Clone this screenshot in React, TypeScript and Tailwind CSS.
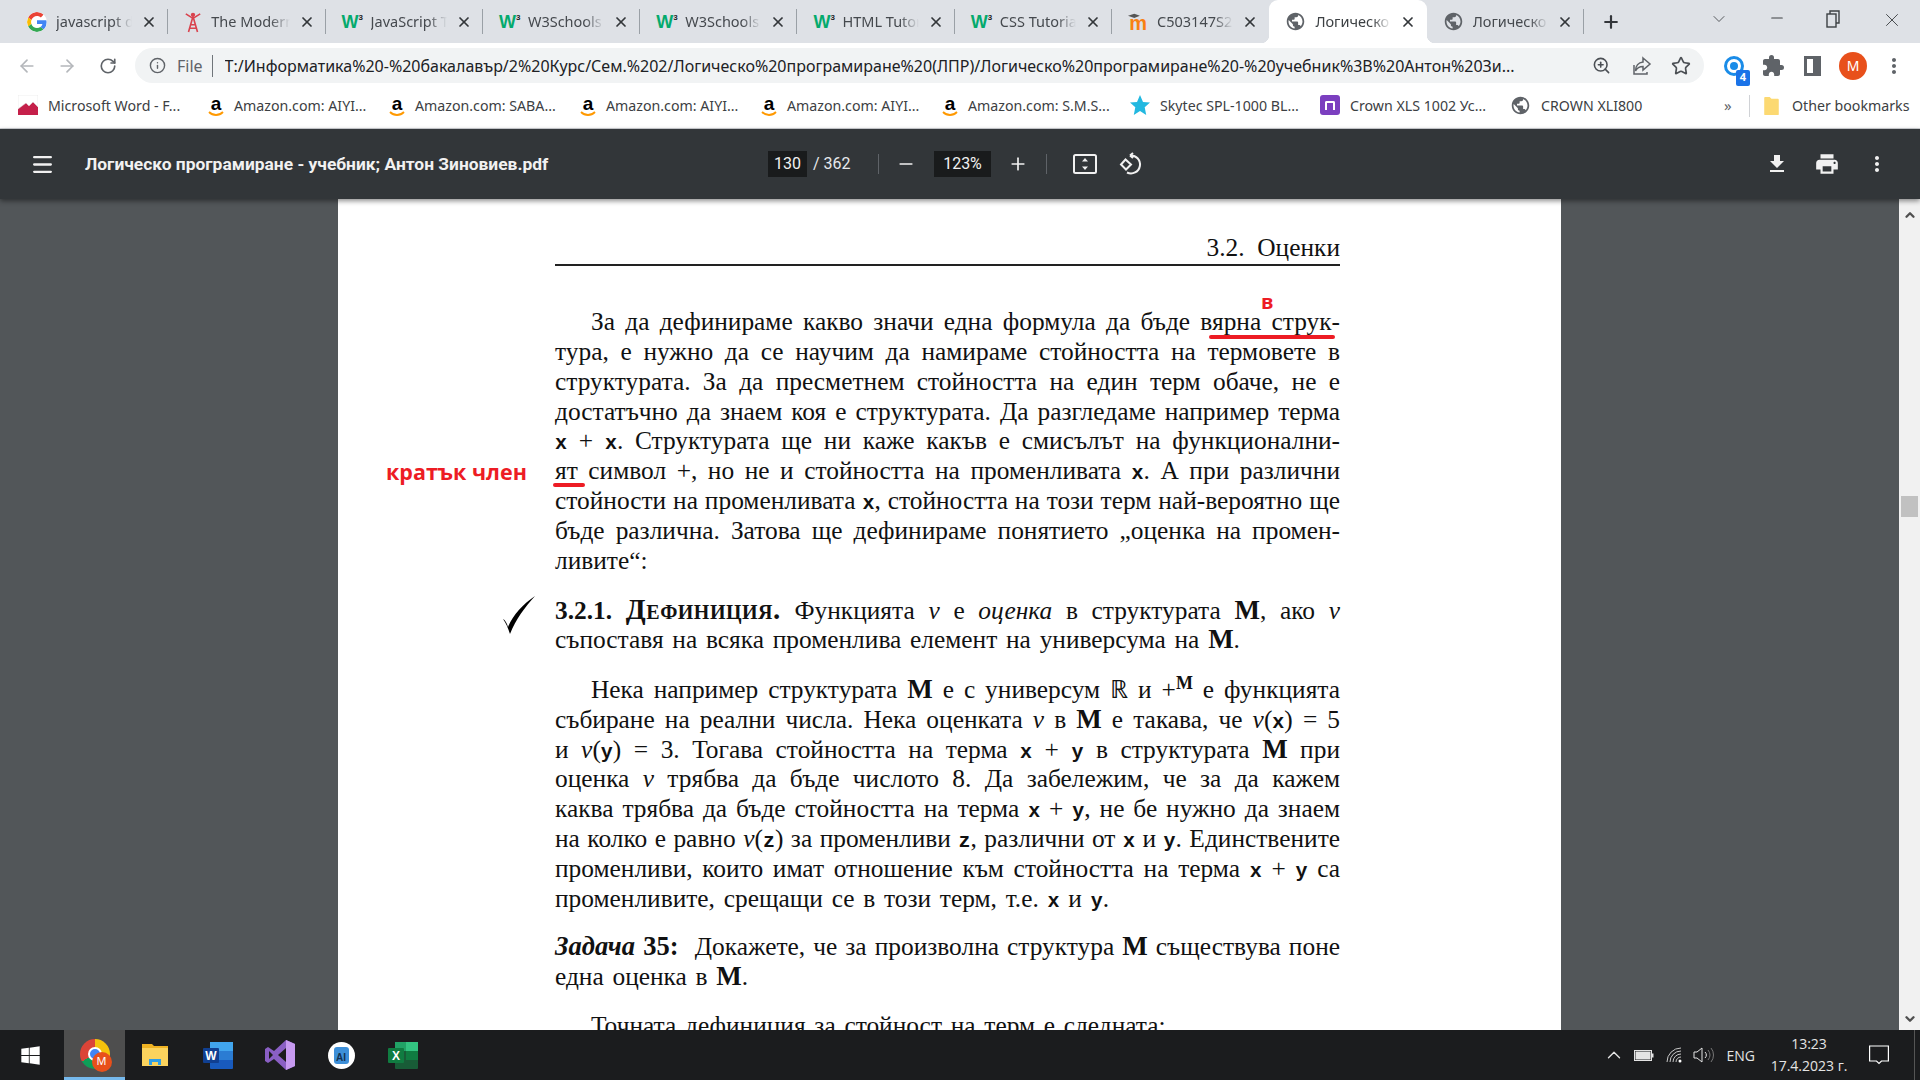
import type { ReactNode } from "react";
import {
  ArrowLeft,
  ArrowRight,
  ChevronDown,
  ChevronUp,
  Info,
  Menu,
  Minus,
  Plus,
  RotateCw,
  Star,
  X,
  ZoomIn,
} from "lucide-react";
import { MdExtension, MdFileDownload, MdMoreVert, MdPrint, MdPublic } from "react-icons/md";
import { FaWindows } from "react-icons/fa";

function GoogleIcon() {
  return (
    <svg viewBox="0 0 48 48" className="h-[20px] w-[20px] shrink-0 rounded-full bg-white">
      <path fill="#EA4335" d="M24 9.5c3.5 0 6.700 1.200 9.200 3.600l6.900-6.900C35.900 2.400 30.500 0 24 0 14.600 0 6.500 5.400 2.600 13.200l8 6.200C12.500 13.700 17.800 9.500 24 9.500z" />
      <path fill="#4285F4" d="M47 24.500c0-1.600-.1-3.100-.4-4.500H24v9h12.900c-.6 3-2.200 5.500-4.700 7.200l7.700 6c4.500-4.200 7.100-10.300 7.100-17.700z" />
      <path fill="#FBBC05" d="M10.600 28.600c-.5-1.400-.8-3-.8-4.600s.3-3.200.8-4.600l-8-6.200C.9 16.500 0 20.100 0 24s.9 7.500 2.600 10.800l8-6.200z" />
      <path fill="#34A853" d="M24 48c6.500 0 11.900-2.100 15.900-5.800l-7.700-6c-2.100 1.400-4.900 2.300-8.200 2.300-6.200 0-11.500-4.200-13.400-9.900l-8 6.200C6.500 42.600 14.600 48 24 48z" />
    </svg>
  );
}

function TowerIcon() {
  return (
    <svg viewBox="0 0 20 24" className="h-[22px] w-[18px] shrink-0" fill="none" stroke="#d9434e" strokeWidth="1.800">
      <path d="M10 6 5 23M10 6l5 17M7 15h6M6 19h8M2 3l8 5 8-5" />
      <circle cx="10" cy="4" r="1.500" fill="#d9434e" />
    </svg>
  );
}

function W3Icon() {
  return (
    <span className="flex w-[20px] shrink-0 items-start font-['Liberation_Sans',sans-serif] text-[18px] leading-[18px] font-bold text-[#04aa6d]">
      W<span className="text-[8px] leading-[10px] text-[#222]">3</span>
    </span>
  );
}

function MoodleIcon() {
  return (
    <span className="relative flex h-[20px] w-[20px] shrink-0 items-end justify-center font-['Liberation_Sans',sans-serif] text-[20px] leading-[18px] font-bold text-[#f98012]">
      m
      <svg viewBox="0 0 20 8" className="absolute top-[1px] left-0 h-[7px] w-[14px]">
        <path d="M0 3 9 0l8 3-8 3z" fill="#555" />
      </svg>
    </span>
  );
}

function Globe({ className = "h-[21px] w-[21px] text-[#5f6368]" }: { className?: string }) {
  return <MdPublic className={`shrink-0 ${className}`} />;
}

function AmazonIcon() {
  return (
    <span className="relative flex h-[22px] w-[16px] shrink-0 justify-center font-['Liberation_Sans',sans-serif] text-[19px] leading-[17px] font-bold text-black">
      a
      <svg viewBox="0 0 16 6" className="absolute bottom-0 left-0 h-[6px] w-[16px]" fill="none">
        <path d="M1 1c4 4 10 4 14 0" stroke="#f90" strokeWidth="1.800" />
      </svg>
    </span>
  );
}

const tabs: { title: string; icon: ReactNode; active?: boolean; sep?: boolean }[] = [
  { title: "javascript d", icon: <GoogleIcon />, sep: true },
  { title: "The Modern", icon: <TowerIcon />, sep: true },
  { title: "JavaScript T", icon: <W3Icon />, sep: true },
  { title: "W3Schools", icon: <W3Icon />, sep: true },
  { title: "W3Schools", icon: <W3Icon />, sep: true },
  { title: "HTML Tutor", icon: <W3Icon />, sep: true },
  { title: "CSS Tutorial", icon: <W3Icon />, sep: true },
  { title: "C503147S2", icon: <MoodleIcon /> },
  { title: "Логическо", icon: <Globe />, active: true },
  { title: "Логическо", icon: <Globe />, sep: true },
];

function TabStrip() {
  return (
    <div className="flex h-[43px] shrink-0 items-stretch bg-[#dee1e6] pl-[11px] text-[#45494e]">
      {tabs.map((t, i) => (
        <div
          key={i}
          className={`relative flex w-[157.3px] shrink-0 items-center gap-[9px] pr-[11px] pl-[16px] ${
            t.active ? "rounded-t-[9px] bg-white text-[#3c4043]" : ""
          }`}
        >
          {t.icon}
          <span className="w-[80px] overflow-hidden text-[14.500px] whitespace-nowrap [mask-image:linear-gradient(to_right,black_75%,transparent)]">
            {t.title}
          </span>
          <X size={16} strokeWidth={2.6} className="ml-auto shrink-0 text-[#33363a]" />
          {t.sep && <span className="absolute top-[9px] right-0 h-[25px] w-px bg-[#9aa0a6]" />}
          {t.active && (
            <>
              <span className="absolute bottom-0 left-[-8px] h-[8px] w-[8px] bg-[radial-gradient(circle_at_0_0,transparent_8px,white_8.500px)]" />
              <span className="absolute right-[-8px] bottom-0 h-[8px] w-[8px] bg-[radial-gradient(circle_at_100%_0,transparent_8px,white_8.500px)]" />
            </>
          )}
        </div>
      ))}
      <div className="ml-[17px] flex items-center">
        <Plus size={20} strokeWidth={2.6} className="text-[#33363a]" />
      </div>
      <div className="ml-auto flex items-start pt-[9px] text-[#3c4043]">
        <ChevronDown size={20} strokeWidth={1} className="mr-[39px]" />
        <Minus size={18} strokeWidth={1.500} className="mr-[39px]" />
        <svg viewBox="0 0 16 18" className="mr-[40px] h-[20px] w-[16px]" fill="none" stroke="currentColor" strokeWidth="1.400">
          <rect x="2" y="4" width="9" height="13" />
          <path d="M5 4V1h9v12h-3" />
        </svg>
        <X size={22} strokeWidth={1} className="mr-[17px]" />
      </div>
    </div>
  );
}

function AddressBar() {
  return (
    <div className="flex h-[45px] shrink-0 items-center bg-white text-[#5f6368]">
      <div className="flex w-[135px] shrink-0 items-center pl-[17px]">
        <ArrowLeft size={20} className="text-[#b4b7bb]" />
        <ArrowRight size={20} className="ml-[20px] text-[#b4b7bb]" />
        <RotateCw size={18} strokeWidth={2.2} className="ml-[22px]" />
      </div>
      <div className="flex h-[35px] w-[1569px] shrink-0 items-center rounded-full bg-[#f1f3f4] pl-[14px]">
        <Info size={17} />
        <span className="ml-[11px] text-[16px]">File</span>
        <span className="ml-[9px] h-[22px] w-px bg-[#70757a]" />
        <span className="ml-[12px] w-[1346px] overflow-hidden text-[16px] whitespace-nowrap text-[#202124]">
          T:/Информатика%20-%20бакалавър/2%20Курс/Сем.%202/Логическо%20програмиране%20(ЛПР)/Логическо%20програмиране%20-%20учебник%3B%20Антон%20Зи...
        </span>
        <ZoomIn size={19} className="ml-[21px] shrink-0 text-[#4b4f54]" />
        <svg viewBox="0 0 20 20" className="ml-[21px] h-[20px] w-[20px] shrink-0" fill="none" stroke="currentColor" strokeWidth="1.500">
          <path d="M11 2l7 6-7 6v-3.500c-3.500 0-6 1.500-7.500 4.500 0-5 3-8.500 7.500-9z" />
          <path d="M2 9v9h13v-2" />
        </svg>
        <Star size={20} strokeWidth={2} className="ml-[19px] shrink-0 text-[#4b4f54]" />
      </div>
      <div className="relative ml-[20px] flex h-[20px] w-[20px] shrink-0 items-center justify-center rounded-full border-[3px] border-[#1a8ce8]">
        <span className="h-[8px] w-[8px] rounded-full bg-[#1a8ce8]" />
        <span className="absolute top-[11px] left-[9px] flex h-[16px] w-[14px] items-center justify-center rounded-[2px] bg-[#1a73e8] text-[11px] font-bold text-white">
          4
        </span>
      </div>
      <MdExtension size={24} className="ml-[17px] shrink-0" />
      <span className="ml-[19px] flex h-[20px] w-[17px] shrink-0 justify-end border-[3px] border-[#5f6368]">
        <span className="h-full w-[5px] bg-[#5f6368]" />
      </span>
      <span className="ml-[18px] flex h-[28px] w-[28px] shrink-0 items-center justify-center rounded-full bg-[#e8501b] text-[14px] text-white">
        M
      </span>
      <MdMoreVert size={24} className="ml-[15px] shrink-0" />
    </div>
  );
}

const bookmarks: { title: string; icon: ReactNode; cls: string }[] = [
  {
    title: "Microsoft Word - F...",
    cls: "w-[190px]",
    icon: (
      <svg viewBox="0 0 20 20" className="h-[20px] w-[20px] shrink-0">
        <rect width="20" height="20" fill="#c5204a" />
        <path d="M0 0h20v12l-5-5-4 4-3-3-8 6z" fill="#fff" stroke="#ddd" strokeWidth=".5" />
      </svg>
    ),
  },
  { title: "Amazon.com: AIYI...", cls: "w-[181px]", icon: <AmazonIcon /> },
  { title: "Amazon.com: SABA...", cls: "w-[191px]", icon: <AmazonIcon /> },
  { title: "Amazon.com: AIYI...", cls: "w-[181px]", icon: <AmazonIcon /> },
  { title: "Amazon.com: AIYI...", cls: "w-[181px]", icon: <AmazonIcon /> },
  { title: "Amazon.com: S.M.S...", cls: "w-[188px]", icon: <AmazonIcon /> },
  {
    title: "Skytec SPL-1000 BL...",
    cls: "w-[190px]",
    icon: (
      <svg viewBox="0 0 20 20" className="h-[20px] w-[20px] shrink-0">
        <path d="M10 0l3 7 7 .6-5.300 4.700L16.200 20 10 16l-6.200 4 1.500-7.700L0 7.600 7 7z" fill="#22b8e0" />
      </svg>
    ),
  },
  {
    title: "Crown XLS 1002 Ус...",
    cls: "w-[190px]",
    icon: (
      <span className="flex h-[20px] w-[20px] shrink-0 items-center justify-center rounded-[3px] bg-[#7b3fbf]">
        <span className="h-[9px] w-[10px] rounded-t-[2px] border-[2px] border-b-0 border-white" />
      </span>
    ),
  },
  { title: "CROWN XLI800", cls: "w-[214px]", icon: <Globe /> },
];

function BookmarksBar() {
  return (
    <div className="flex h-[41px] shrink-0 items-center border-b border-[#d0d2d6] bg-white pb-[5px] pl-[18px] text-[14.200px] text-[#3c4043]">
      {bookmarks.map((b, i) => (
        <div key={i} className={`flex shrink-0 items-center gap-[10px] whitespace-nowrap ${b.cls}`}>
          {b.icon}
          <span>{b.title}</span>
        </div>
      ))}
      <span className="w-[8px] text-[15px] text-[#5f6368]">»</span>
      <span className="ml-[17px] h-[22px] w-px bg-[#d0d2d6]" />
      <svg viewBox="0 0 18 22" className="ml-[13px] h-[20px] w-[17px] shrink-0">
        <path d="M1 2a1 1 0 0 1 1-1h5l2 2h7a1 1 0 0 1 1 1v16a1 1 0 0 1-1 1H2a1 1 0 0 1-1-1z" fill="#fcd972" />
      </svg>
      <span className="ml-[12px] whitespace-nowrap">Other bookmarks</span>
    </div>
  );
}

function PdfToolbar() {
  return (
    <div className="relative z-10 flex h-[70px] shrink-0 items-center bg-[#323639] font-['Roboto',sans-serif] text-white shadow-[0_2px_5px_rgba(0,0,0,0.45)]">
      <Menu size={25} strokeWidth={2.2} className="ml-[30px] shrink-0 text-[#f1f1f1]" />
      <span className="mt-[1px] ml-[30px] w-[683px] shrink-0 text-[17.400px] font-bold whitespace-nowrap text-[#f1f1f1]">
        Логическо програмиране - учебник; Антон Зиновиев.pdf
      </span>
      <span className="flex h-[26px] w-[39px] shrink-0 items-center justify-center bg-[#191b1c] text-[16px] text-[#f1f1f1]">130</span>
      <span className="ml-[6px] w-[39px] shrink-0 text-[16px] whitespace-nowrap text-[#e8eaed]">/ 362</span>
      <span className="ml-[26px] h-[20px] w-px shrink-0 bg-[#5f6368]" />
      <Minus size={20} className="ml-[17px] shrink-0 text-[#f1f1f1]" />
      <span className="ml-[18px] flex h-[26px] w-[57px] shrink-0 items-center justify-center bg-[#191b1c] text-[16px] text-[#f1f1f1]">123%</span>
      <Plus size={20} className="ml-[17px] shrink-0 text-[#f1f1f1]" />
      <span className="ml-[18px] h-[20px] w-px shrink-0 bg-[#5f6368]" />
      <svg viewBox="0 0 24 20" className="ml-[26px] h-[20px] w-[24px] shrink-0" fill="none" stroke="#f1f1f1" strokeWidth="2">
        <rect x="1" y="1" width="22" height="18" rx="1.500" />
        <path d="M12 4l-3 3.500h6zM12 16l-3-3.500h6z" fill="#f1f1f1" stroke="none" />
      </svg>
      <svg viewBox="0 0 24 24" className="ml-[21px] h-[24px] w-[24px] shrink-0" fill="none" stroke="#f1f1f1" strokeWidth="2">
        <path d="M7.500 7.500 3 12.500l5 5 5-5z" />
        <path d="M12 3.500a9 9 0 1 1-3 17M12 3.500 15 1M12 3.500 15 6" />
      </svg>
      <div className="ml-auto flex items-center gap-[25px] pr-[31px]">
        <MdFileDownload size={24} className="text-[#f1f1f1]" />
        <MdPrint size={26} className="text-[#f1f1f1]" />
        <MdMoreVert size={24} className="text-[#f1f1f1]" />
      </div>
    </div>
  );
}

function Line({ children, first, last }: { children: ReactNode; first?: boolean; last?: boolean }) {
  return (
    <div
      className={`h-[29.800px] whitespace-nowrap ${first ? "pl-[36px]" : ""} ${
        last ? "text-left [word-spacing:2.400px]" : "text-justify [text-align-last:justify]"
      }`}
    >
      {children}
    </div>
  );
}

// bold typewriter letters of the terms, the bigger M of structures
function Tt({ children }: { children: ReactNode }) {
  return <span className="font-['Liberation_Mono',monospace] text-[20px] leading-none font-bold">{children}</span>;
}

function Bm() {
  return <span className="text-[27px] leading-none font-bold">M</span>;
}

function V() {
  return <i>v</i>;
}

function PdfPage() {
  return (
    <div className="relative h-full w-[1223px] shrink-0 overflow-hidden bg-white pr-[221px] pl-[217px] font-['Liberation_Serif',serif] text-[25.400px] leading-[29.800px] text-[#111]">
      <div className="mt-[34px] border-b-2 border-[#222] pb-[1px] text-right">3.2.&nbsp;&nbsp;Оценки</div>
      <div className="mt-[41.500px]">
        <Line first>За да дефинираме какво значи една формула да бъде вярна струк-</Line>
        <Line>тура, е нужно да се научим да намираме стойността на термовете в</Line>
        <Line>структурата. За да пресметнем стойността на един терм обаче, не е</Line>
        <Line>достатъчно да знаем коя е структурата. Да разгледаме например терма</Line>
        <Line>
          <Tt>x</Tt> + <Tt>x</Tt>. Структурата ще ни каже какъв е смисълът на функционални-
        </Line>
        <Line>
          ят символ +, но не и стойността на променливата <Tt>x</Tt>. А при различни
        </Line>
        <Line>
          стойности на променливата <Tt>x</Tt>, стойността на този терм най-вероятно ще
        </Line>
        <Line>бъде различна. Затова ще дефинираме понятието „оценка на промен-</Line>
        <Line last>ливите“:</Line>
      </div>
      <div className="mt-[20px]">
        <Line>
          <b>
            3.2.1.{" "}
            <span className="text-[29px] leading-none tracking-[0.5px] [font-variant:small-caps]">Дефиниция.</span>
          </b>{" "}
          Функцията <V /> е <i>оценка</i> в структурата <Bm />, ако <V />
        </Line>
        <Line last>
          съпоставя на всяка променлива елемент на универсума на <Bm />.
        </Line>
      </div>
      <div className="mt-[20px]">
        <Line first>
          Нека например структурата <Bm /> е с универсум ℝ и +<sup className="text-[18px] leading-none font-bold">M</sup> е функцията
        </Line>
        <Line>
          събиране на реални числа. Нека оценката <V /> в <Bm /> е такава, че <V />(<Tt>x</Tt>) = 5
        </Line>
        <Line>
          и <V />(<Tt>y</Tt>) = 3. Тогава стойността на терма <Tt>x</Tt> + <Tt>y</Tt> в структурата <Bm /> при
        </Line>
        <Line>
          оценка <V /> трябва да бъде числото 8. Да забележим, че за да кажем
        </Line>
        <Line>
          каква трябва да бъде стойността на терма <Tt>x</Tt> + <Tt>y</Tt>, не бе нужно да знаем
        </Line>
        <Line>
          на колко е равно <V />(<Tt>z</Tt>) за променливи <Tt>z</Tt>, различни от <Tt>x</Tt> и <Tt>y</Tt>. Единствените
        </Line>
        <Line>
          променливи, които имат отношение към стойността на терма <Tt>x</Tt> + <Tt>y</Tt> са
        </Line>
        <Line last>
          променливите, срещащи се в този терм, т.е. <Tt>x</Tt> и <Tt>y</Tt>.
        </Line>
      </div>
      <div className="mt-[19px]">
        <Line>
          <b className="text-[26.500px] leading-none">
            <i>Задача</i> 35:
          </b>
          &nbsp; Докажете, че за произволна структура <Bm /> съществува поне
        </Line>
        <Line last>
          една оценка в <Bm />.
        </Line>
      </div>
      <div className="mt-[19px]">
        <Line first last>
          Точната дефиниция за стойност на терм е следната:
        </Line>
      </div>

      {/* handwritten marks on top of the page */}
      <span className="absolute top-[93px] left-[923px] font-['Open_Sans',sans-serif] text-[20px] leading-[20px] font-bold text-[#ed1c24]">
        в
      </span>
      <span className="absolute top-[136px] left-[871px] h-[4px] w-[126px] rounded-full bg-[#ed1c24]" />
      <span className="absolute top-[257px] left-[48px] font-['Open_Sans',sans-serif] text-[21.500px] leading-[32px] font-bold whitespace-nowrap text-[#ed1c24]">
        кратък член
      </span>
      <span className="absolute top-[284px] left-[215px] h-[4px] w-[32px] rounded-full bg-[#ed1c24]" />
      <svg viewBox="0 0 32 38" className="absolute top-[397px] left-[165px] h-[38px] w-[32px]">
        <path d="M0 23c2 1 4 4 5 8C10 19 20 8 32 0 22 11 13 23 7 38 5 32 3 27 0 23z" fill="#000" />
      </svg>
    </div>
  );
}

function Scrollbar() {
  return (
    <div className="ml-auto flex w-[21px] shrink-0 flex-col items-center bg-[#f1f1f1] pt-[9px] pb-[4px] text-[#505050]">
      <ChevronUp size={14} strokeWidth={4} />
      <div className="mt-[274px] h-[21px] w-[17px] bg-[#c1c1c1]" />
      <ChevronDown size={14} strokeWidth={4} className="mt-auto" />
    </div>
  );
}

function TaskbarIcons() {
  return (
    <>
      <div className="flex w-[64px] shrink-0 items-center justify-center pr-[4px]">
        <FaWindows size={21} className="text-white" />
      </div>
      <div className="relative flex h-full w-[61px] shrink-0 items-center justify-center border-b-[3px] border-[#76b9ed] bg-[#4e4e4e]">
        <span className="relative h-[30px] w-[30px] rounded-full bg-[conic-gradient(#f4c20d_0deg_120deg,#0f9d58_120deg_240deg,#db4437_240deg_360deg)]">
          <span className="absolute top-[8px] left-[8px] h-[14px] w-[14px] rounded-full border-2 border-white bg-[#4285f4]" />
          <span className="absolute right-[-2px] bottom-[-3px] flex h-[20px] w-[20px] items-center justify-center rounded-full bg-[#e8501b] text-[11px] text-white">
            M
          </span>
        </span>
      </div>
      <div className="flex w-[60px] shrink-0 items-center justify-center">
        <svg viewBox="0 0 28 26" className="h-[26px] w-[28px]">
          <path d="M1 2h10l2 2h14v20H1z" fill="#f0b323" />
          <rect x="1" y="6" width="26" height="18" fill="#fbd35d" />
          <path d="M8 23v-6h12v6h-3v-3h-6v3z" fill="#2f9ee6" />
        </svg>
      </div>
      <div className="flex w-[65px] shrink-0 items-center justify-center">
        <svg viewBox="0 0 30 27" className="h-[27px] w-[30px]">
          <rect x="7" y="0" width="23" height="27" rx="1" fill="#185abd" />
          <rect x="7" y="0" width="23" height="9" fill="#41a5ee" />
          <rect x="7" y="9" width="23" height="9" fill="#2b7cd3" />
          <rect x="0" y="6" width="16" height="15" rx="1" fill="#103f91" />
          <text x="8" y="18" textAnchor="middle" fontSize="12" fontWeight="700" fill="#fff" fontFamily="Liberation Sans">
            W
          </text>
        </svg>
      </div>
      <div className="flex w-[60px] shrink-0 items-center justify-center">
        <svg viewBox="0 0 30 30" className="h-[30px] w-[30px]">
          <path d="M21 0l9 4v22l-9 4-12-11-6 4-3-2V9l3-2 6 4z" fill="#8a5fc4" />
          <path d="M21 8v14l-8-7z" fill="#1b1b1b" />
          <path d="M21 0l9 4v22l-9 4z" fill="#c79af0" />
          <path d="M4 11l4 4-4 4z" fill="#1b1b1b" />
        </svg>
      </div>
      <div className="flex w-[62px] shrink-0 items-center justify-center">
        <span className="flex h-[27px] w-[27px] items-center justify-center rounded-full bg-white">
          <span className="flex h-[17px] w-[15px] items-end justify-center rounded-[3px] bg-[#3d8fd8] font-['Liberation_Sans',sans-serif] text-[10px] leading-[12px] font-bold text-[#14304f]">
            AI
          </span>
        </span>
      </div>
      <div className="flex w-[62px] shrink-0 items-center justify-center">
        <svg viewBox="0 0 30 27" className="h-[27px] w-[30px]">
          <rect x="7" y="0" width="23" height="27" rx="1" fill="#185c37" />
          <rect x="18" y="0" width="12" height="9" fill="#33c481" />
          <rect x="7" y="0" width="11" height="9" fill="#21a366" />
          <rect x="18" y="9" width="12" height="9" fill="#107c41" />
          <rect x="0" y="6" width="16" height="15" rx="1" fill="#107c41" />
          <text x="8" y="18" textAnchor="middle" fontSize="12" fontWeight="700" fill="#fff" fontFamily="Liberation Sans">
            X
          </text>
        </svg>
      </div>
    </>
  );
}

function Tray() {
  return (
    <div className="ml-auto flex h-full items-center text-[#e4e4e4]">
      <ChevronUp size={22} strokeWidth={1.500} />
      <svg viewBox="0 0 20 11" className="ml-[9px] h-[11px] w-[20px]" fill="none" stroke="currentColor">
        <rect x=".5" y=".5" width="17" height="10" />
        <rect x="2" y="2" width="14" height="7" fill="currentColor" />
        <rect x="18" y="3.500" width="1.500" height="4" fill="currentColor" stroke="none" />
      </svg>
      <svg viewBox="0 0 16 16" className="ml-[12px] h-[16px] w-[16px]" fill="none" stroke="#c9c9c9" strokeWidth="1">
        <path d="M1 15a14 14 0 0 1 14-14M4 15A11 11 0 0 1 15 4M7 15a8 8 0 0 1 8-8M10 15a5 5 0 0 1 5-5" />
        <circle cx="14" cy="14" r="1.500" fill="#fff" stroke="none" />
      </svg>
      <svg viewBox="0 0 22 18" className="ml-[11px] h-[18px] w-[22px]" fill="none" stroke="currentColor" strokeWidth="1">
        <path d="M1 6h3l5-4v14l-5-4H1z" />
        <path d="M12 6a4 4 0 0 1 0 6" />
        <path d="M15 4a8 8 0 0 1 0 10M18 2a11 11 0 0 1 0 14" stroke="#777" />
      </svg>
      <span className="ml-[12px] font-['Open_Sans',sans-serif] text-[14px]">ENG</span>
      <div className="ml-[16px] flex w-[76px] flex-col items-center font-['Open_Sans',sans-serif] text-[14px] leading-[22px] whitespace-nowrap">
        <span>13:23</span>
        <span>17.4.2023 г.</span>
      </div>
      <svg viewBox="0 0 20 20" className="ml-[22px] h-[20px] w-[20px]" fill="none" stroke="#fff" strokeWidth="1.200">
        <path d="M.6 1h18.800v15H12.500L10 18.500 7.500 16H.6z" />
      </svg>
      <span className="ml-[25px] h-full w-px bg-[#555]" />
      <span className="w-[5px]" />
    </div>
  );
}

export default function App() {
  return (
    <div className="flex h-screen w-screen flex-col overflow-hidden bg-white font-['Noto_Sans',sans-serif]">
      <TabStrip />
      <AddressBar />
      <BookmarksBar />
      <PdfToolbar />
      <div className="flex min-h-0 flex-1 bg-[#525659] pl-[338px]">
        <PdfPage />
        <Scrollbar />
      </div>
      <div className="flex h-[50px] shrink-0 items-center bg-[#1b1c1e]">
        <TaskbarIcons />
        <Tray />
      </div>
    </div>
  );
}
